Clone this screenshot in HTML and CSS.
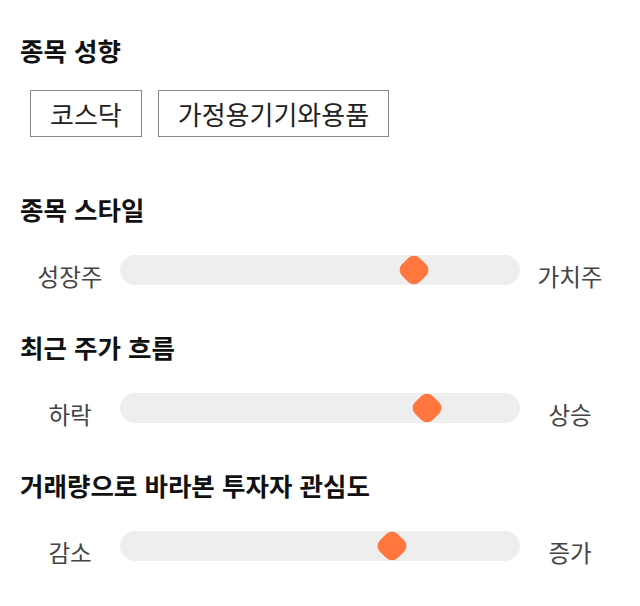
FILE: index.html
```html
<!DOCTYPE html>
<html lang="ko">
<head>
  <meta charset="UTF-8" />
  <meta name="viewport" content="width=device-width, initial-scale=1.0"/>
  <title>종목 성향</title>
  <link rel="stylesheet" href="styles.css">
</head>
<body>

  <!-- 종목 성향 -->
  <div class="section">
    <div class="title">종목 성향</div>
    <div class="tags">
      <span class="tag">코스닥</span>
      <span class="tag">가정용기기와용품</span>
    </div>
  </div>

  <!-- 종목 스타일 -->
  <div class="section first-slider">
    <div class="title">종목 스타일</div>
    <div class="slider-row">
      <span class="label">성장주</span>
      <div class="track">
        <div class="thumb" style="left: 73.4%"></div>
      </div>
      <span class="label">가치주</span>
    </div>
  </div>

  <!-- 최근 주가 흐름 -->
  <div class="section">
    <div class="title">최근 주가 흐름</div>
    <div class="slider-row">
      <span class="label">하락</span>
      <div class="track">
        <div class="thumb" style="left: 76.7%"></div>
      </div>
      <span class="label">상승</span>
    </div>
  </div>

  <!-- 거래량 -->
  <div class="section">
    <div class="title">거래량으로 바라본 투자자 관심도</div>
    <div class="slider-row">
      <span class="label">감소</span>
      <div class="track">
        <div class="thumb" style="left: 68%"></div>
      </div>
      <span class="label">증가</span>
    </div>
  </div>

</body>
</html>
```

FILE: styles.css
```css
body {
  font-family: "Noto Sans CJK KR", "Noto Sans", sans-serif;
  margin: 0;
  padding: 35px 20px 0;
  color: #111;
  background: #fff;
}

.section {
  margin-top: 41px;
}

.section:first-child {
  margin-top: 0;
}

.first-slider {
  margin-top: 57px;
}

.title {
  font-size: 25.5px;
  font-weight: bold;
  line-height: 30px;
}

.tags {
  display: flex;
  gap: 16px;
  margin-top: 25px;
  padding-left: 10px;
}

.tag {
  border: 1px solid #888;
  padding: 0 19px;
  font-size: 26px;
  line-height: 45px;
  color: #222;
}

.slider-row {
  display: grid;
  grid-template-columns: 100px 1fr 100px;
  align-items: start;
  margin-top: 31px;
}

.label {
  text-align: center;
  font-size: 23.5px;
  line-height: 30px;
  padding-top: 6px;
  color: #444;
}

.track {
  position: relative;
  height: 30px;
  background-color: #eee;
  border-radius: 15px;
  overflow: hidden;
}

.thumb {
  position: absolute;
  top: 50%;
  width: 25px;
  height: 25px;
  background-color: #ff763f;
  border-radius: 8px;
  transform: translate(-50%, -50%) rotate(45deg);
}
```
